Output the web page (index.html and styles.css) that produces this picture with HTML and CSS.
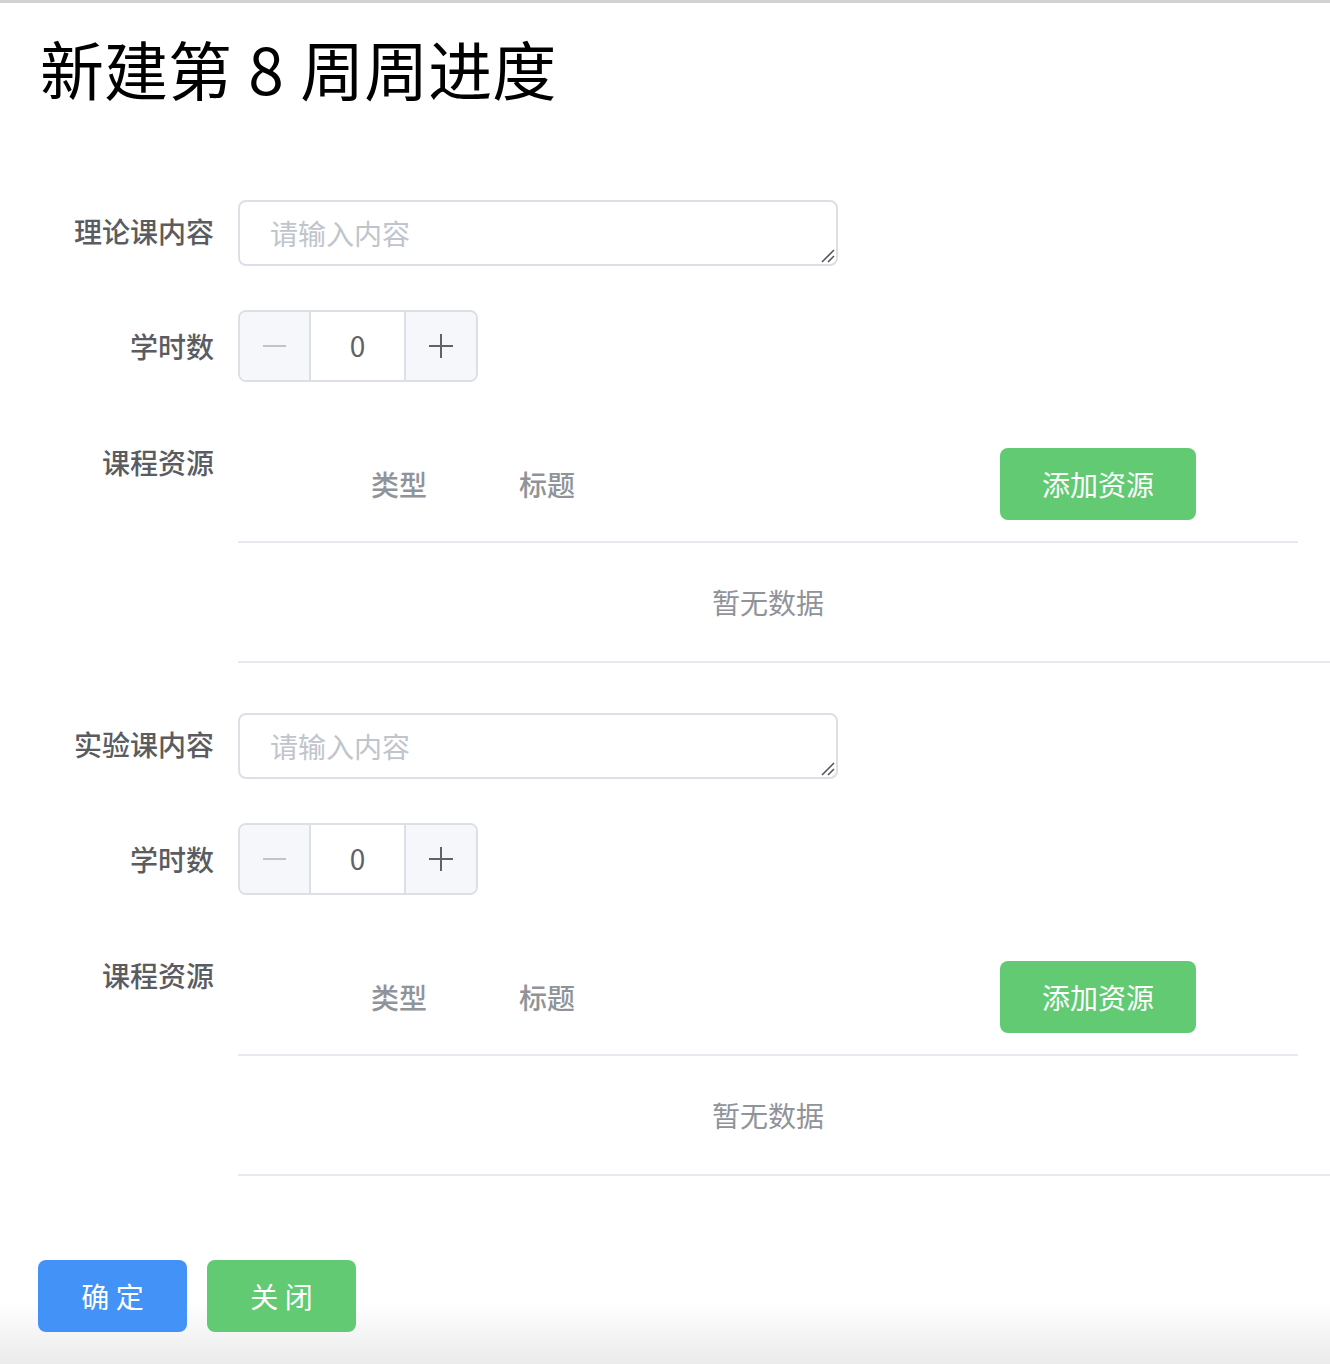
FILE: index.html
```html
<!DOCTYPE html>
<html lang="zh-CN">
<head>
<meta charset="utf-8">
<title>新建第 8 周周进度</title>
<link rel="stylesheet" href="styles.css">
</head>
<body>
<div class="page">
  <h1 class="title">新建第 8 周周进度</h1>
  <form class="form">
    <section class="block">
      <div class="item item-text">
        <label class="label">理论课内容</label>
        <div class="content">
          <div class="textarea-wrap">
            <textarea class="textarea" placeholder="请输入内容"></textarea>
            <svg class="grip" width="16" height="16" viewBox="0 0 16 16"><line x1="2" y1="14" x2="14" y2="2" stroke="#555" stroke-width="1.6"/><line x1="8" y1="14" x2="14" y2="8" stroke="#555" stroke-width="1.6"/></svg>
          </div>
        </div>
      </div>
      <div class="item item-number">
        <label class="label">学时数</label>
        <div class="content">
          <div class="number">
            <span class="num-btn num-dec"><svg width="24" height="24" viewBox="0 0 24 24"><line x1="0" y1="12" x2="23" y2="12" stroke="#c0c4cc" stroke-width="2"/></svg></span>
            <input class="num-input" value="0">
            <span class="num-btn num-inc"><svg width="24" height="24" viewBox="0 0 24 24"><line x1="0" y1="12" x2="24" y2="12" stroke="#606266" stroke-width="2"/><line x1="12" y1="0" x2="12" y2="24" stroke="#606266" stroke-width="2"/></svg></span>
          </div>
        </div>
      </div>
      <div class="item item-table">
        <label class="label">课程资源</label>
        <div class="content">
          <div class="table">
            <div class="thead">
              <div class="th"></div>
              <div class="th">类型</div>
              <div class="th">标题</div>
              <div class="th th-op"><button type="button" class="btn btn-success btn-add">添加资源</button></div>
            </div>
            <div class="empty">暂无数据</div>
            <div class="table-end"></div>
          </div>
        </div>
      </div>
    </section>
    <section class="block">
      <div class="item item-text">
        <label class="label">实验课内容</label>
        <div class="content">
          <div class="textarea-wrap">
            <textarea class="textarea" placeholder="请输入内容"></textarea>
            <svg class="grip" width="16" height="16" viewBox="0 0 16 16"><line x1="2" y1="14" x2="14" y2="2" stroke="#555" stroke-width="1.6"/><line x1="8" y1="14" x2="14" y2="8" stroke="#555" stroke-width="1.6"/></svg>
          </div>
        </div>
      </div>
      <div class="item item-number">
        <label class="label">学时数</label>
        <div class="content">
          <div class="number">
            <span class="num-btn num-dec"><svg width="24" height="24" viewBox="0 0 24 24"><line x1="0" y1="12" x2="23" y2="12" stroke="#c0c4cc" stroke-width="2"/></svg></span>
            <input class="num-input" value="0">
            <span class="num-btn num-inc"><svg width="24" height="24" viewBox="0 0 24 24"><line x1="0" y1="12" x2="24" y2="12" stroke="#606266" stroke-width="2"/><line x1="12" y1="0" x2="12" y2="24" stroke="#606266" stroke-width="2"/></svg></span>
          </div>
        </div>
      </div>
      <div class="item item-table">
        <label class="label">课程资源</label>
        <div class="content">
          <div class="table">
            <div class="thead">
              <div class="th"></div>
              <div class="th">类型</div>
              <div class="th">标题</div>
              <div class="th th-op"><button type="button" class="btn btn-success btn-add">添加资源</button></div>
            </div>
            <div class="empty">暂无数据</div>
            <div class="table-end"></div>
          </div>
        </div>
      </div>
    </section>
  </form>
  <div class="actions">
    <button type="button" class="btn btn-primary btn-foot">确 定</button>
    <button type="button" class="btn btn-success btn-foot">关 闭</button>
  </div>
</div>
</body>
</html>
```
FILE: styles.css
```css
html {
  height: 100%;
  background: linear-gradient(to bottom, #ffffff 0, #ffffff calc(100% - 62px), #ebebeb 100%);
}
body {
  margin: 0;
  min-height: 100%;
  border-top: 3px solid #d2d2d2;
  box-sizing: border-box;
  font-family: "Noto Sans CJK SC", "Noto Sans", sans-serif;
  color: #606266;
}
.page {
  padding: 0 32px 0 38px;
}
.title {
  margin: 26px 0 0 2px;
  font-size: 64px;
  line-height: 76px;
  font-weight: 400;
  color: #000;
  word-spacing: 2px;
}
.form {
  padding-top: 95px;
}
.block {
  margin-bottom: 50px;
}
.item {
  display: flex;
  margin-bottom: 44px;
}
.item-table {
  margin-bottom: 0;
}
.label {
  flex: 0 0 200px;
  box-sizing: border-box;
  padding-right: 24px;
  text-align: right;
  font-size: 28px;
  font-weight: 500;
  color: #5a5c61;
  line-height: 72px;
}
.item-text .label {
  line-height: 62px;
}
.content {
  flex: 1;
  min-width: 0;
}
.textarea-wrap {
  position: relative;
  width: 600px;
}
.textarea {
  display: block;
  box-sizing: border-box;
  width: 600px;
  height: 66px;
  margin: 0;
  padding: 10px 30px;
  border: 2px solid #dcdfe6;
  border-radius: 8px;
  font-family: inherit;
  font-size: 28px;
  line-height: 42px;
  color: #606266;
  resize: none;
  outline: none;
}
.textarea::placeholder {
  color: #c0c4cc;
}
.grip {
  position: absolute;
  right: 2px;
  bottom: 2px;
  pointer-events: none;
}
.number {
  display: flex;
  box-sizing: border-box;
  width: 240px;
  height: 72px;
  border: 2px solid #dcdfe6;
  border-radius: 8px;
  overflow: hidden;
}
.num-btn {
  display: flex;
  align-items: center;
  justify-content: center;
  background: #f5f7fa;
}
.num-dec {
  width: 69px;
  border-right: 2px solid #dcdfe6;
}
.num-inc {
  width: 70px;
  border-left: 2px solid #dcdfe6;
}
.num-input {
  flex: 1;
  min-width: 0;
  border: 0;
  padding: 0 0 3px;
  margin: 0;
  text-align: center;
  font-family: inherit;
  font-size: 28px;
  color: #606266;
  background: #fff;
  outline: none;
}
.table {
  width: 100%;
}
.thead {
  display: grid;
  grid-template-columns: 113px 148px 1fr 318px;
  height: 115px;
  align-items: center;
  border-bottom: 2px solid #e6e9f0;
}
.th {
  padding: 0 20px;
  font-size: 28px;
  font-weight: 500;
  color: #909399;
  line-height: 40px;
}
.th-op {
  padding-left: 20px;
}
.empty {
  height: 118px;
  line-height: 118px;
  text-align: center;
  font-size: 28px;
  color: #909399;
}
.table-end {
  height: 2px;
  margin-right: -32px;
  background: #e6e9f0;
}
.btn {
  border: 0;
  border-radius: 8px;
  font-family: inherit;
  font-size: 28px;
  color: #fff;
  padding: 0;
  cursor: pointer;
}
.btn-success {
  background: #62ca73;
}
.btn-primary {
  background: #4292f8;
}
.btn-add {
  display: block;
  width: 196px;
  height: 72px;
}
.actions {
  display: flex;
  gap: 20px;
  margin-top: 84px;
}
.btn-foot {
  width: 149px;
  height: 72px;
  white-space: pre;
}
```
